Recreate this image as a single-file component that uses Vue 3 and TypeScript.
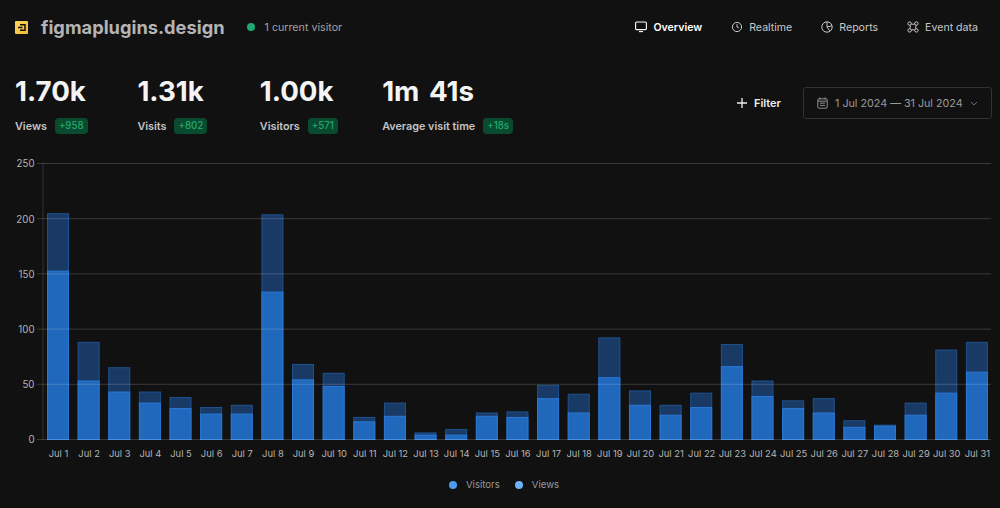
<script setup lang="ts">
const views = [204.5, 88, 65, 43, 38, 29, 31, 203.5, 68, 60, 20, 33, 6, 9, 24, 25, 49, 41, 92, 44, 31, 42, 86, 53, 35, 37, 17, 13, 33, 81, 88]
const visitors = [152.5, 53, 43, 33, 28, 23, 23, 133.5, 54, 48, 16, 21, 4, 4, 21, 20, 37, 24, 56, 31, 22, 29, 66, 39, 28, 24, 11, 12, 22, 42, 61]
const stats = [
  { value: '1.70k', label: 'Views', delta: '+958' },
  { value: '1.31k', label: 'Visits', delta: '+802' },
  { value: '1.00k', label: 'Visitors', delta: '+571' },
  { value: '1m 41s', label: 'Average visit time', delta: '+18s' },
]
const ticks = [0, 50, 100, 150, 200, 250]
const baseY = 439.5
const scale = 276 / 250
const step = 30.63
const barW = 22
const y = (v: number) => baseY - v * scale
const bars = views.map((v, i) => ({
  x: 47 + i * step,
  cx: 47 + i * step + barW / 2,
  label: `Jul ${i + 1}`,
  vy: y(v),
  vh: v * scale,
  sy: y(visitors[i]),
  sh: visitors[i] * scale,
}))
</script>

<template>
  <div class="page">
    <header class="top">
      <div class="brand">
        <svg class="logo" width="13" height="13" viewBox="0 0 13 13">
          <defs>
            <linearGradient id="logoFill" x1="0" y1="0" x2="1" y2="1">
              <stop offset="0" stop-color="#fbd85a" />
              <stop offset="1" stop-color="#f5b83d" />
            </linearGradient>
          </defs>
          <rect width="13" height="13" rx="1" fill="url(#logoFill)" />
          <path d="M5 3.7h5v5.6H5" fill="none" stroke="#15120a" stroke-width="1.5" />
          <path d="M3 6.5h4.5" fill="none" stroke="#15120a" stroke-width="1.5" />
        </svg>
        <span class="site">figmaplugins.design</span>
        <span class="dot"></span>
        <span class="current">1 current visitor</span>
      </div>
      <nav class="nav">
        <a class="item active">
          <svg width="12" height="12" viewBox="0 0 12 12" fill="none" stroke="currentColor" stroke-width="1.1"><rect x="0.6" y="1" width="10.8" height="7.6" rx="1.2" /><path d="M4 10.6h4" /></svg>
          Overview
        </a>
        <a class="item">
          <svg width="12" height="12" viewBox="0 0 12 12" fill="none" stroke="currentColor" stroke-width="1"><circle cx="6" cy="6" r="4.6" /><path d="M6 3.2V6l1.8 1" /></svg>
          Realtime
        </a>
        <a class="item">
          <svg width="12" height="12" viewBox="0 0 12 12" fill="none" stroke="currentColor" stroke-width="1"><circle cx="6" cy="6" r="5.2" /><path d="M6 1v5l2.8 3.8M6 6l5-1.2" /></svg>
          Reports
        </a>
        <a class="item">
          <svg width="12" height="12" viewBox="0 0 12 12" fill="none" stroke="currentColor" stroke-width="1"><circle cx="2.6" cy="2.6" r="1.7" /><circle cx="9.4" cy="2.6" r="1.7" /><circle cx="2.6" cy="9.4" r="1.7" /><circle cx="9.4" cy="9.4" r="1.7" /><path d="M4.2 2.9Q6 3.8 7.8 2.9M4.2 9.1Q6 8.2 7.8 9.1M2.9 4.2Q3.8 6 2.9 7.8M9.1 4.2Q8.2 6 9.1 7.8" /></svg>
          Event data
        </a>
      </nav>
    </header>

    <section class="summary">
      <div class="stats">
        <div v-for="s in stats" :key="s.label" class="stat">
          <div class="value">{{ s.value }}</div>
          <div class="meta">
            <span class="label">{{ s.label }}</span>
            <span class="delta">{{ s.delta }}</span>
          </div>
        </div>
      </div>
      <div class="controls">
        <button class="filter">
          <svg width="10" height="10" viewBox="0 0 10 10" fill="none" stroke="currentColor" stroke-width="1.3"><path d="M5 0v10M0 5h10" /></svg>
          Filter
        </button>
        <button class="range">
          <svg width="11" height="12" viewBox="0 0 11 12" fill="none" stroke="currentColor" stroke-width="0.9"><rect x="0.8" y="1.8" width="9.4" height="9.4" rx="1.2" /><path d="M3 0.4v2M8 0.4v2M0.8 4.2h9.4M3 6.2h5M3 8.4h5" /></svg>
          <span>1 Jul 2024 — 31 Jul 2024</span>
          <svg class="chev" width="8" height="5" viewBox="0 0 8 5" fill="none" stroke="currentColor" stroke-width="0.9"><path d="M1 1l3 3 3-3" /></svg>
        </button>
      </div>
    </section>

    <svg class="chart" width="1000" height="350" viewBox="0 150 1000 350">
      <line x1="43" x2="43" y1="163" y2="440" class="axis" />
      <g v-for="b in bars" :key="b.label">
        <rect :x="b.x + 0.5" :y="b.vy" :width="barW - 1" :height="b.vh" class="bar-views" />
        <rect :x="b.x + 0.5" :y="b.sy" :width="barW - 1" :height="b.sh" class="bar-visitors" />
        <text :x="b.cx + 0.5" y="456.5" text-anchor="middle" class="tick">{{ b.label }}</text>
      </g>
      <g v-for="t in ticks" :key="t">
        <line x1="37" x2="991" :y1="y(t)" :y2="y(t)" class="grid" />
        <text x="34.5" :y="y(t) + 3.8" text-anchor="end" class="tick ylab">{{ t }}</text>
      </g>
    </svg>

    <footer class="legend">
      <span class="key"><i class="swatch one"></i>Visitors</span>
      <span class="key"><i class="swatch two"></i>Views</span>
    </footer>
  </div>
</template>

<style>
html, body { margin: 0; background: #111111; }
</style>

<style scoped>
.page {
  width: 1000px;
  height: 508px;
  overflow: hidden;
  background: #111111;
  font-family: Inter, "Liberation Sans", sans-serif;
  color: #fff;
  position: relative;
}
.top {
  display: flex;
  justify-content: space-between;
  align-items: center;
  height: 54px;
  padding: 0 22px 0 15px;
}
.brand { display: flex; align-items: center; }
.logo { margin-right: 13px; }
.site { font-size: 18.25px; font-weight: 700; color: #b4b4b4; margin-top: -1px; }
.dot { width: 8px; height: 8px; border-radius: 50%; background: #1fa871; margin: 0 10px 0 22px; }
.current { font-size: 10.7px; color: #a0a0a0; }
.nav { display: flex; gap: 29px; }
.item { display: flex; align-items: center; gap: 6px; font-size: 10.6px; color: #c8c8c8; font-weight: 400; }
.item.active { color: #fff; font-weight: 600; }
.summary {
  display: flex;
  justify-content: space-between;
  align-items: flex-start;
  padding: 20px 8px 0 15px;
  height: 76px;
}
.stats { display: flex; }
.stat { width: 122.4px; }
.value { font-size: 27.7px; font-weight: 700; line-height: 34px; color: #f4f4f4; white-space: nowrap; word-spacing: 3px; }
.meta { display: flex; align-items: center; gap: 8px; margin-top: 10px; white-space: nowrap; }
.label { font-size: 10.8px; font-weight: 600; color: #c4c4c4; }
.delta { font-size: 9.7px; font-weight: 500; color: #22a86f; background: #0a4a2e; border-radius: 4px; padding: 0 4px; line-height: 16px; }
.controls { display: flex; align-items: center; gap: 22px; margin-top: 13px; }
button { font-family: inherit; border: none; background: none; padding: 0; display: flex; align-items: center; }
.filter { gap: 7px; font-size: 11px; font-weight: 600; color: #eee; }
.range {
  width: 189px;
  height: 32px;
  box-sizing: border-box;
  justify-content: flex-start;
  padding-left: 13px;
  gap: 7px;
  font-size: 10.74px;
  color: #9a9a9a;
  border: 1px solid #333;
  border-radius: 3px;
}
.chev { color: #777; }
.chart { display: block; position: absolute; left: 0; top: 150px; }
.axis { stroke: #333; stroke-width: 1; }
.grid { stroke: rgba(255, 255, 255, 0.17); stroke-width: 1; }
.bar-views { fill: #1a3a66; stroke: #1f5290; stroke-width: 1; }
.bar-visitors { fill: #2068bb; stroke: #2a78d6; stroke-width: 1; }
.tick { font-size: 9.4px; fill: #b5b5b5; font-family: Inter, "Liberation Sans", sans-serif; }
.ylab { font-size: 9.7px; }
.legend {
  position: absolute;
  left: 0;
  right: 0;
  top: 477px;
  display: flex;
  justify-content: center;
  gap: 15px;
  padding-left: 8px;
}
.key { display: flex; align-items: center; gap: 9px; font-size: 9.6px; line-height: 15px; color: #9a9a9a; }
.swatch { width: 8px; height: 8px; border-radius: 50%; }
.one { background: #4a9df0; }
.two { background: #6db2f7; }
</style>
